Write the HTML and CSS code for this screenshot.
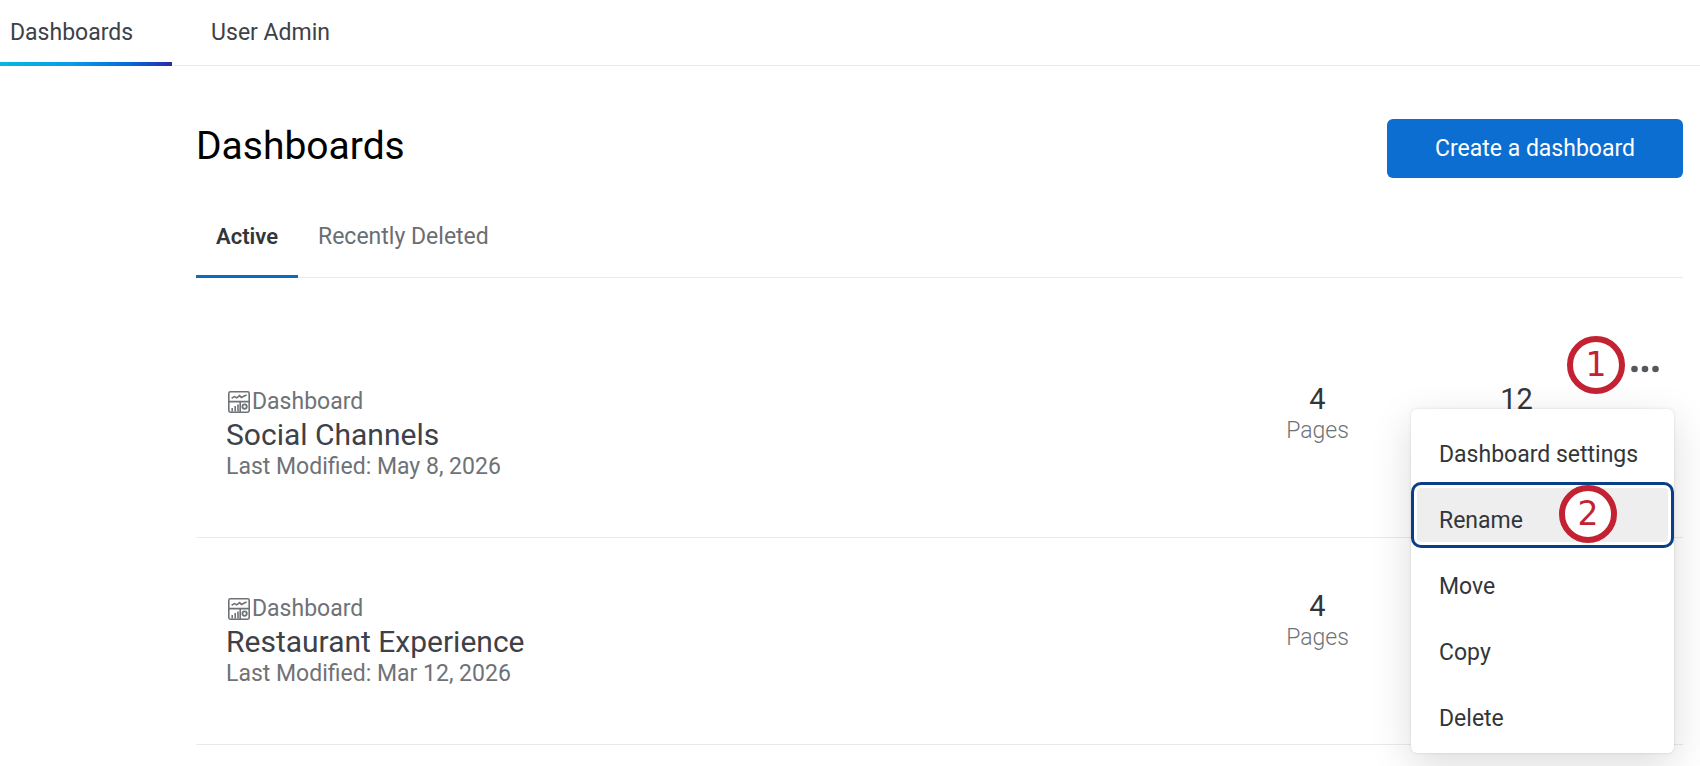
FILE: index.html
```html
<!DOCTYPE html>
<html lang="en">
<head>
<meta charset="utf-8">
<meta name="viewport" content="width=device-width, initial-scale=1">
<title>Dashboards</title>
<link rel="stylesheet" href="styles.css">
</head>
<body>
<svg class="defs" aria-hidden="true">
  <symbol id="dash-icon" viewBox="0 0 22 22">
    <g fill="none" stroke="currentColor" stroke-width="1.6">
      <rect x="0.8" y="0.8" width="20.4" height="20.4" rx="1.6"/>
      <path d="M1 10.6h20M12.2 10.6V21M4.2 20.5v-3.6M7.2 20.5v-5.4M10 20.5v-7"/>
      <path d="M3.6 7.4l2.6-1.8 2.6 1.2 2.8-2.2 1.8 2 2.4-1.4 2.8-1.2"/>
      <circle cx="16.6" cy="15.6" r="2.2" stroke-width="1.8"/>
    </g>
  </symbol>
</svg>

<nav class="topnav">
  <a class="topnav-link current" href="#">Dashboards</a>
  <a class="topnav-link" href="#">User Admin</a>
</nav>

<main class="page">
  <header class="page-head">
    <h1>Dashboards</h1>
    <button class="primary" type="button">Create a dashboard</button>
  </header>

  <div class="tabs" role="tablist">
    <button class="tab selected" type="button" role="tab" aria-selected="true">Active</button>
    <button class="tab" type="button" role="tab" aria-selected="false">Recently Deleted</button>
  </div>

  <section class="list">
    <article class="row">
      <div class="info">
        <div class="kind"><svg class="kind-icon"><use href="#dash-icon"/></svg>Dashboard</div>
        <h2>Social Channels</h2>
        <p class="modified">Last Modified: May 8, 2026</p>
      </div>
      <div class="stat"><span class="count">4</span><span class="unit">Pages</span></div>
      <div class="stat"><span class="count">12</span></div>
      <div class="actions">
        <button class="more" type="button" aria-label="More actions">
          <svg class="more-icon" viewBox="0 0 28 8"><circle cx="3.5" cy="4" r="3.3"/><circle cx="14" cy="4" r="3.3"/><circle cx="24.5" cy="4" r="3.3"/></svg>
        </button>
        <span class="step step-one">1</span>
        <div class="menu" role="menu">
          <button class="item" type="button" role="menuitem">Dashboard settings</button>
          <button class="item focused" type="button" role="menuitem">Rename<span class="step step-two">2</span></button>
          <button class="item" type="button" role="menuitem">Move</button>
          <button class="item" type="button" role="menuitem">Copy</button>
          <button class="item" type="button" role="menuitem">Delete</button>
        </div>
      </div>
    </article>

    <article class="row">
      <div class="info">
        <div class="kind"><svg class="kind-icon"><use href="#dash-icon"/></svg>Dashboard</div>
        <h2>Restaurant Experience</h2>
        <p class="modified">Last Modified: Mar 12, 2026</p>
      </div>
      <div class="stat"><span class="count">4</span><span class="unit">Pages</span></div>
    </article>
  </section>
</main>
</body>
</html>
```
FILE: styles.css
```css
* { box-sizing: border-box; }

body {
  min-height: 100vh;
  margin: 0;
  background: #fff;
  color: #32363a;
  font: 400 23px/32px Roboto, "Liberation Sans", sans-serif;
}

button {
  margin: 0;
  border: 0;
  background: none;
  color: inherit;
  font: inherit;
  white-space: nowrap;
  cursor: pointer;
}

h1, h2, p { margin: 0; }

.defs { display: none; }

/* Top navigation */
.topnav {
  display: flex;
  height: 66px;
  box-shadow: inset 0 -1px #e9eaeb;
}

.topnav-link {
  padding: 17px 39px 0;
  color: #3e4148;
  text-decoration: none;
}

.topnav-link.current {
  padding-left: 10px;
  background: linear-gradient(90deg, #05b8e0, #0a9ceb 40%, #0768dd 75%, #2a2ba6) bottom / 100% 4px no-repeat;
}

/* Page */
.page { padding: 53px 17px 0 196px; }

.page-head {
  display: flex;
  justify-content: space-between;
  align-items: flex-start;
}

h1 {
  color: #000;
  font-size: 39px;
  font-weight: 400;
  line-height: 54px;
}

.primary {
  padding: 14px 48px 13px;
  border-radius: 6px;
  background: #0b6ed0;
  color: #fff;
}

.tabs {
  display: flex;
  margin-top: 38px;
  box-shadow: inset 0 -1px #e9eaeb;
}

.tab {
  padding: 5px 20px 25px;
  color: #6b6e73;
}

.tab.selected {
  color: #32363a;
  font-size: 22px;
  font-weight: 600;
  box-shadow: inset 0 -3px #0b6cbb;
}

/* Dashboard list */
.list { padding-top: 53px; }

.row {
  display: grid;
  grid-template-columns: 1fr 199px 199px 58px;
  padding: 0 9px 0 30px;
  min-height: 207px;
  border-bottom: 1px solid #e9eaeb;
}

.info { padding-top: 55px; }

.kind, .modified { color: #6f7276; }

.kind {
  display: flex;
  align-items: center;
}

.kind-icon {
  width: 22px;
  height: 22px;
  margin: 0 2px;
}

h2 {
  color: #3e4148;
  font-size: 30px;
  font-weight: 400;
  line-height: 33px;
}

.stat {
  display: flex;
  flex-direction: column;
  align-items: center;
  padding-top: 51px;
}

.count {
  font-size: 29px;
  line-height: 34px;
}

.unit {
  color: #6f7276;
  font-weight: 300;
  line-height: 29px;
}

.actions {
  position: relative;
  display: flex;
  justify-content: center;
  align-items: flex-start;
  padding-top: 24px;
}

.more { padding: 10px; }

.more-icon {
  display: block;
  width: 28px;
  height: 8px;
  fill: #54585d;
}

/* Context menu */
.menu {
  position: absolute;
  z-index: 1;
  top: 78px;
  right: 0;
  width: 263px;
  padding: 7px 0;
  border-radius: 6px;
  background: #fff;
  box-shadow: 0 0 3px rgba(0, 0, 0, .12), 0 12px 42px rgba(0, 0, 0, .14);
}

.item {
  position: relative;
  display: block;
  width: 100%;
  height: 66px;
  padding: 12px 28px 0;
  text-align: left;
}

.item.focused {
  border-radius: 10px;
  background: #eee;
  box-shadow: inset 0 0 0 3px #083f88, inset 0 0 0 6px #fff;
}

/* Numbered callouts */
.step {
  position: absolute;
  z-index: 2;
  width: 58px;
  height: 58px;
  border: 6px solid #c32232;
  border-radius: 50%;
  background: #fff;
  color: #c32232;
  font: 400 33px/46px "DejaVu Sans", sans-serif;
  text-align: center;
}

.step-one {
  top: 5px;
  right: 49px;
}

.step-two {
  top: 3px;
  right: 57px;
}
```
